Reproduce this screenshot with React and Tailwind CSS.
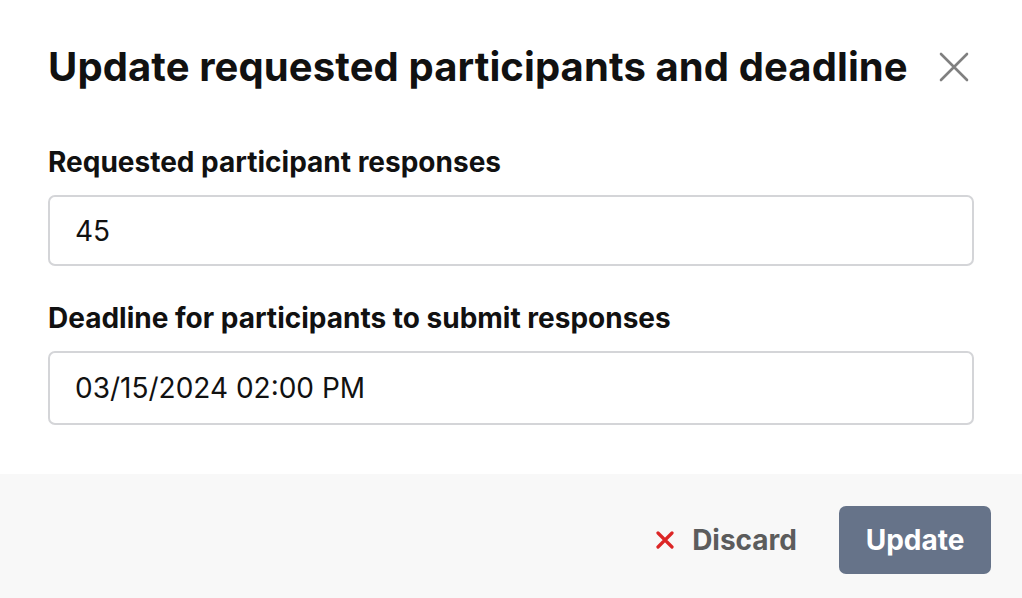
import React, { useState } from 'react';

const UpdateDialog = () => {
  const [responses, setResponses] = useState('45');
  const [deadline, setDeadline] = useState('03/15/2024 02:00 PM');

  return (
    <div className="w-[1022px] h-[598px] bg-white flex flex-col" style={{ fontFamily: 'Inter, "Noto Sans", sans-serif' }}>
      {/* Header + form */}
      <div className="flex-1 px-12 pt-[44px]">
        <div className="flex items-center justify-between">
          <h1 className="text-[40px] leading-[46px] font-bold text-[#111] tracking-[0.1px]">
            Update requested participants and deadline
          </h1>
          <button className="mr-[4px] text-[#808080]">
            <svg width="32" height="32" viewBox="0 0 32 32" fill="none" stroke="currentColor" strokeWidth="2.6" strokeLinecap="round">
              <path d="M3 3 L29 29 M29 3 L3 29" />
            </svg>
          </button>
        </div>

        <label className="block mt-[55px] text-[28px] leading-[34px] font-bold text-[#111]">
          Requested participant responses
        </label>
        <input
          type="text"
          value={responses}
          onChange={(e) => setResponses(e.target.value)}
          className="mt-[16px] w-full h-[71px] px-[25px] text-[28px] text-[#111] border-2 border-[#d4d5d8] rounded-[7px] outline-none"
        />

        <label className="block mt-[35px] text-[28px] leading-[34px] font-bold text-[#111]">
          Deadline for participants to submit responses
        </label>
        <input
          type="text"
          value={deadline}
          onChange={(e) => setDeadline(e.target.value)}
          className="mt-[16px] w-full h-[74px] px-[25px] text-[28px] text-[#111] border-2 border-[#d4d5d8] rounded-[7px] outline-none"
        />
      </div>

      {/* Footer */}
      <div className="h-[124px] bg-[#f8f8f8] flex items-start justify-end gap-[42px] pt-[32px] px-[31px]">
        <button className="h-[68px] flex items-center gap-[18px] text-[#5c5c5c] text-[28px] font-bold">
          <svg width="18" height="18" viewBox="0 0 18 18" fill="none" stroke="#dc2626" strokeWidth="3.2" strokeLinecap="round">
            <path d="M2 2 L16 16 M16 2 L2 16" />
          </svg>
          Discard
        </button>
        <button className="w-[152px] h-[68px] rounded-[7px] bg-[#667389] text-white text-[28px] font-bold">
          Update
        </button>
      </div>
    </div>
  );
};

export default UpdateDialog;
